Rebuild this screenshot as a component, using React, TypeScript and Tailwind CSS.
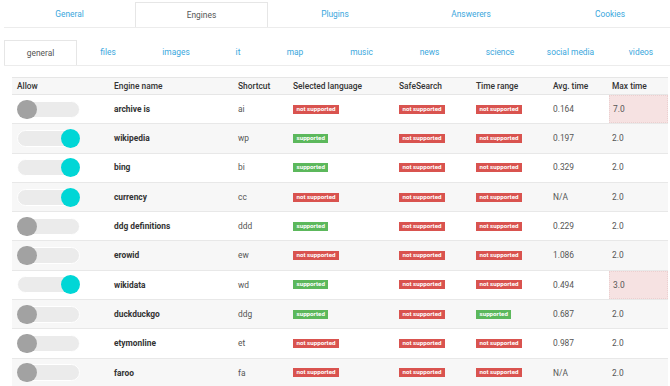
import React from "react";

type Row = {
  on: boolean;
  name: string;
  sc: string;
  lang: boolean;
  safe: boolean;
  time: boolean;
  avg: string;
  max: string;
  warn?: boolean;
};

const rows: Row[] = [
  { on: false, name: "archive is", sc: "ai", lang: false, safe: false, time: false, avg: "0.164", max: "7.0", warn: true },
  { on: true, name: "wikipedia", sc: "wp", lang: true, safe: false, time: false, avg: "0.197", max: "2.0" },
  { on: true, name: "bing", sc: "bi", lang: true, safe: false, time: false, avg: "0.329", max: "2.0" },
  { on: true, name: "currency", sc: "cc", lang: false, safe: false, time: false, avg: "N/A", max: "2.0" },
  { on: false, name: "ddg definitions", sc: "ddd", lang: true, safe: false, time: false, avg: "0.229", max: "2.0" },
  { on: false, name: "erowid", sc: "ew", lang: false, safe: false, time: false, avg: "1.086", max: "2.0" },
  { on: true, name: "wikidata", sc: "wd", lang: true, safe: false, time: false, avg: "0.494", max: "3.0", warn: true },
  { on: false, name: "duckduckgo", sc: "ddg", lang: true, safe: false, time: true, avg: "0.687", max: "2.0" },
  { on: false, name: "etymonline", sc: "et", lang: false, safe: false, time: false, avg: "0.987", max: "2.0" },
  { on: false, name: "faroo", sc: "fa", lang: false, safe: false, time: false, avg: "N/A", max: "2.0" },
];

const topTabs = [
  { label: "General", w: "w-[131px]" },
  { label: "Engines", w: "w-[133px]", active: true },
  { label: "Plugins", w: "w-[134px]" },
  { label: "Answerers", w: "w-[138px]" },
  { label: "Cookies", w: "w-[140px]" },
];

const subTabs = [
  { label: "general", w: "w-[73px]", active: true },
  { label: "files", w: "w-[62px]" },
  { label: "images", w: "w-[74px]" },
  { label: "it", w: "w-[50px]" },
  { label: "map", w: "w-[64px]" },
  { label: "music", w: "w-[69px]" },
  { label: "news", w: "w-[67px]" },
  { label: "science", w: "w-[74px]" },
  { label: "social media", w: "w-[67px]" },
  { label: "videos", w: "w-[74px]" },
];

const cols = "grid grid-cols-[97px_124px_55px_106px_77px_77px_59px_61px]";

function Badge({ ok }: { ok: boolean }) {
  return ok ? (
    <span className="inline-block bg-[#5cb85c] text-white font-bold text-[6.2px] leading-[9px] px-[3.5px] h-[9px]">
      supported
    </span>
  ) : (
    <span className="inline-block bg-[#d9534f] text-white font-bold text-[6.2px] leading-[9px] px-[3.5px] h-[9px]">
      not supported
    </span>
  );
}

function Toggle({ on }: { on: boolean }) {
  return (
    <div className="relative w-[63px] h-[19px] flex items-center">
      <div className="w-[63px] h-[17px] rounded-full bg-[#ebebeb] border border-white" />
      <div
        className={
          on
            ? "absolute right-0 top-0 w-[19px] h-[19px] rounded-full bg-[#00d6d6]"
            : "absolute left-0 top-0 w-[20px] h-[19px] rounded-full bg-[#a2a2a2]"
        }
      />
    </div>
  );
}

export default function App() {
  return (
    <div
      className="w-[670px] h-[386px] overflow-hidden bg-white text-[#555]"
      style={{ fontFamily: "Roboto, 'Liberation Sans', sans-serif" }}
    >
      {/* top tabs */}
      <div className="pt-[2px] pl-[4px]">
        <div className="flex w-[700px] border-b border-[#ececec]">
          {topTabs.map((t) => (
            <div
              key={t.label}
              className={
                t.active
                  ? `${t.w} shrink-0 h-[25px] flex items-center justify-center text-[8.4px] text-[#555] border border-b-0 border-[#e6e6e6] bg-white -mb-px`
                  : `${t.w} shrink-0 h-[25px] flex items-center justify-center text-[8.4px] text-[#3aa7dd]`
              }
            >
              {t.label}
            </div>
          ))}
        </div>
      </div>

      {/* sub tabs */}
      <div className="pt-[12px] pl-[4px]">
        <div className="flex w-[700px] border-b border-[#ececec]">
          {subTabs.map((t) => (
            <div
              key={t.label}
              className={
                t.active
                  ? `${t.w} shrink-0 h-[25px] flex items-center justify-center text-[8.4px] text-[#555] border border-b-0 border-[#e6e6e6] bg-white -mb-px`
                  : `${t.w} shrink-0 h-[25px] flex items-center justify-center text-[8.4px] text-[#3aa7dd]`
              }
            >
              {t.label}
            </div>
          ))}
        </div>
      </div>

      {/* table */}
      <div className="pt-[11px] pl-[12px]">
        <div className="w-[656px] text-[8.4px]">
          <div className={`${cols} h-[18px] items-center bg-[#f7f7f7] border-t border-b border-[#e6e6e6] font-medium text-[#333]`}>
            <div className="pl-[5px]">Allow</div>
            <div className="pl-[5px]">Engine name</div>
            <div className="pl-[5px]">Shortcut</div>
            <div className="pl-[5px]">Selected language</div>
            <div className="pl-[5px]">SafeSearch</div>
            <div className="pl-[5px]">Time range</div>
            <div className="pl-[5px]">Avg. time</div>
            <div className="pl-[5px]">Max time</div>
          </div>
          {rows.map((r, i) => (
            <div
              key={r.name}
              className={`${cols} h-[29.3px] items-stretch border-b border-[#e8e8e8] ${i % 2 === 1 ? "bg-[#f7f7f7]" : "bg-white"}`}
            >
              <div className="pl-[5px] flex items-center">
                <Toggle on={r.on} />
              </div>
              <div className="pl-[5px] flex items-center font-bold text-[#333]">{r.name}</div>
              <div className="pl-[5px] flex items-center">{r.sc}</div>
              <div className="pl-[5px] flex items-center">
                <Badge ok={r.lang} />
              </div>
              <div className="pl-[5px] flex items-center">
                <Badge ok={r.safe} />
              </div>
              <div className="pl-[5px] flex items-center">
                <Badge ok={r.time} />
              </div>
              <div className="pl-[5px] flex items-center">{r.avg}</div>
              <div
                className={
                  r.warn
                    ? "pl-[3px] ml-[2px] flex items-center bg-[#f6e2e2] border border-dotted border-[#ebd0d0]"
                    : "pl-[5px] flex items-center"
                }
              >
                {r.max}
              </div>
            </div>
          ))}
        </div>
      </div>
    </div>
  );
}
